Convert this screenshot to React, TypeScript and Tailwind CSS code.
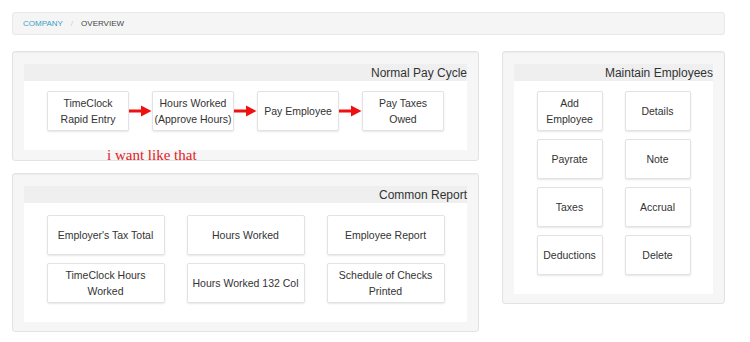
import React from "react";

const payCycle = ["TimeClock\nRapid Entry", "Hours Worked\n(Approve Hours)", "Pay Employee", "Pay Taxes\nOwed"];

const reports = [
  "Employer's Tax Total",
  "Hours Worked",
  "Employee Report",
  "TimeClock Hours\nWorked",
  "Hours Worked 132 Col",
  "Schedule of Checks\nPrinted",
];

const employees = ["Add\nEmployee", "Details", "Payrate", "Note", "Taxes", "Accrual", "Deductions", "Delete"];

const Tile = ({ label, className }: { label: string; className: string }) => (
  <div
    className={`h-[40px] flex items-center justify-center text-center whitespace-pre-line bg-white border border-[#e3e3e3] rounded-[2px] shadow-[0_1px_2px_rgba(0,0,0,0.1)] text-[10.5px] leading-[16px] text-[#333] ${className}`}
  >
    {label}
  </div>
);

const Arrow = () => (
  <svg width="23" height="12" viewBox="0 0 23 12" className="shrink-0">
    <rect x="0" y="4.5" width="14" height="3" fill="#ee1111" />
    <polygon points="12,0.5 22.5,6 12,11.5" fill="#ee1111" />
  </svg>
);

const Panel = ({ title, children, className = "" }: { title: string; children: React.ReactNode; className?: string }) => (
  <div
    className={`relative bg-[#f6f6f6] border border-[#e3e3e3] rounded-[3px] shadow-[inset_0_1px_1px_rgba(0,0,0,0.04)] px-[11px] pt-[12px] pb-[10px] ${className}`}
  >
    {/* heading band */}
    <div className="h-[17px] bg-[#efefef] flex items-center justify-end text-[12px] text-[#333]">{title}</div>
    {children}
  </div>
);

export default function App() {
  return (
    <div className="w-[750px] h-[342px] bg-white pt-[12px] pl-[12px] pr-[25px] font-['Liberation_Sans',Arial,sans-serif]">
      <div className="h-[23px] bg-[#f5f5f5] border border-[#e8e8e8] rounded-[3px] flex items-center pl-[10px] text-[8px]">
        <span className="text-[#3a9fc4]">COMPANY</span>
        <span className="mx-[8px] text-[#ccc]">/</span>
        <span className="text-[#444]">OVERVIEW</span>
      </div>

      <div className="flex gap-[23px] mt-[16px] items-start">
        <div className="w-[467px] flex flex-col gap-[12px]">
          <Panel title="Normal Pay Cycle" className="h-[110px]">
            <div className="bg-white flex justify-center items-center pt-[10px] pb-[19px]">
              {payCycle.map((label, i) => (
                <React.Fragment key={label}>
                  {i > 0 && <Arrow />}
                  <Tile label={label} className="w-[82px]" />
                </React.Fragment>
              ))}
            </div>
            <span className="absolute left-[94px] top-[92px] text-[15px] text-[#e1201d] font-['Liberation_Serif',serif]">
              i want like that
            </span>
          </Panel>

          <Panel title="Common Report" className="h-[159px]">
            <div className="bg-white grid grid-cols-[118px_118px_118px] justify-center gap-x-[22px] gap-y-[8px] pt-[12px] pb-[19px]">
              {reports.map((label) => (
                <Tile key={label} label={label} className="w-[118px]" />
              ))}
            </div>
          </Panel>
        </div>

        <Panel title="Maintain Employees" className="w-[223px] h-[253px]">
          <div className="bg-white grid grid-cols-[66px_66px] justify-center gap-x-[22px] gap-y-[8px] pt-[10px] pb-[19px]">
            {employees.map((label) => (
              <Tile key={label} label={label} className="w-[66px]" />
            ))}
          </div>
        </Panel>
      </div>
    </div>
  );
}
